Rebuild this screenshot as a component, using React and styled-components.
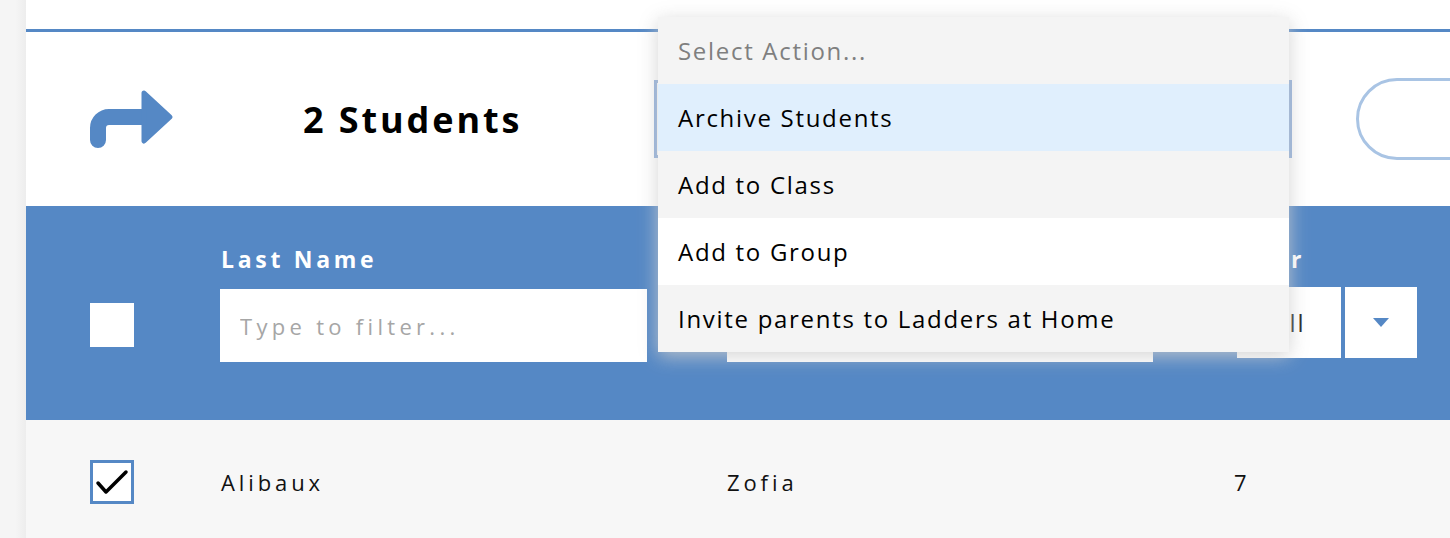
import styled, { createGlobalStyle } from 'styled-components';

const Global = createGlobalStyle`
    html, body {
        margin: 0;
        padding: 0;
        background: #f6f6f6;
        font-family: "Open Sans", "Noto Sans", sans-serif;
        overflow: hidden;
    }
`;

const Page = styled.div`
    display: flex;
    height: 538px;
    background: #f5f5f5;
`;

const Gutter = styled.div`
    width: 26px;
    flex-shrink: 0;
    background: linear-gradient(to right, #f5f5f5 60%, #ededed);
`;

const Panel = styled.main`
    flex: 1;
    display: flex;
    flex-direction: column;
    background: #fff;
    min-width: 0;
    overflow: hidden;
`;

const TopGap = styled.div`
    height: 29px;
    flex-shrink: 0;
    background: #fff;
`;

const Toolbar = styled.section`
    height: 174px;
    flex-shrink: 0;
    border-top: 3px solid #5588c5;
    display: flex;
    align-items: center;
    padding-left: 63px;
    background: #fff;
`;

const ShareIcon = styled.svg`
    width: 86px;
    height: 60px;
    flex-shrink: 0;
    margin-top: 2px;
`;

const Count = styled.h2`
    margin: 0 0 0 128px;
    width: 351px;
    flex-shrink: 0;
    font-size: 36px;
    font-weight: 700;
    letter-spacing: 2.9px;
    color: #000;
`;

const SelectWrap = styled.div`
    position: relative;
    flex-shrink: 0;
    width: 632px;
    height: 72px;
    border: 3px solid #8aabd9;
`;

const Menu = styled.ul`
    position: absolute;
    left: 1px;
    top: -66px;
    width: 631px;
    margin: 0;
    padding: 0;
    list-style: none;
    box-shadow: 0 4px 18px rgba(205, 205, 205, 0.85);
    z-index: 5;
`;

const Option = styled.li`
    height: 67px;
    display: flex;
    align-items: center;
    padding-left: 20px;
    font-size: 24px;
    letter-spacing: 1.7px;
    color: ${p => (p.$placeholder ? '#7f7f7f' : '#000')};
    background: ${p => (p.$active ? '#e0effd' : p.$white ? '#fff' : '#f4f4f4')};
`;

const PillButton = styled.button`
    margin-left: 64px;
    width: 200px;
    height: 82px;
    flex-shrink: 0;
    border: 3px solid #a9c4e4;
    border-radius: 42px;
    background: #fff;
`;

const TableHead = styled.div`
    display: grid;
    grid-template-columns: 130px 507px 510px 200px;
    align-items: start;
    padding: 38px 0 58px 64px;
    background: #5588c5;
    flex-shrink: 0;
`;

const Cell = styled.div`
    display: flex;
    flex-direction: column;
`;

const Label = styled.div`
    height: 30px;
    margin-bottom: 15px;
    margin-left: 1px;
    font-size: 23px;
    font-weight: 700;
    letter-spacing: 3.7px;
    line-height: 30px;
    color: #fff;
    white-space: nowrap;
`;

const FilterInput = styled.input`
    box-sizing: border-box;
    width: ${p => p.$w}px;
    height: 73px;
    border: none;
    outline: none;
    padding: 0 20px;
    font-family: inherit;
    font-size: 22px;
    letter-spacing: 4.3px;
    color: #333;
    &::placeholder {
        color: #a6a6a6;
    }
`;

const BlankBox = styled.div`
    width: 44px;
    height: 44px;
    margin-top: 59px;
    background: #fff;
`;

const SelectRow = styled.div`
    display: flex;
    gap: 4px;
    margin-top: -2px;
`;

const SelectBox = styled.div`
    width: 104px;
    height: 71px;
    display: flex;
    align-items: center;
    justify-content: center;
    background: #fff;
    font-size: 24px;
    letter-spacing: 2px;
    color: #222;
`;

const ToggleBox = styled.div`
    width: 72px;
    height: 71px;
    display: flex;
    align-items: center;
    justify-content: center;
    background: #fff;
`;

const Row = styled.div`
    display: grid;
    grid-template-columns: 130px 507px 510px 200px;
    align-items: center;
    height: 124px;
    flex-shrink: 0;
    padding-left: 64px;
    background: #f7f7f7;
`;

const CheckBox = styled.div`
    box-sizing: border-box;
    width: 44px;
    height: 44px;
    border: 3px solid #5588c5;
    background: #fff;
    display: flex;
    align-items: center;
    justify-content: center;
`;

const CellText = styled.div`
    font-size: 22px;
    letter-spacing: 3.9px;
    color: #111;
    margin-left: ${p => p.$shift || 0}px;
`;

export default function App() {
    return (
        <Page>
            <Global />
            <Gutter />
            <Panel>
                <TopGap />
                <Toolbar>
                    <ShareIcon viewBox="0 0 86 60">
                        <path d="M9 50 V38 A11 11 0 0 1 20 27 H58" fill="none" stroke="#5588c5" strokeWidth="16" strokeLinecap="round" strokeLinejoin="round" />
                        <polygon points="55,3 81,27 55,51" fill="#5588c5" stroke="#5588c5" strokeWidth="5" strokeLinejoin="round" />
                    </ShareIcon>
                    <Count>2 Students</Count>
                    <SelectWrap>
                        <Menu>
                            <Option $placeholder>Select Action...</Option>
                            <Option $active>Archive Students</Option>
                            <Option>Add to Class</Option>
                            <Option $white>Add to Group</Option>
                            <Option>Invite parents to Ladders at Home</Option>
                        </Menu>
                    </SelectWrap>
                    <PillButton />
                </Toolbar>
                <TableHead>
                    <Cell>
                        <BlankBox />
                    </Cell>
                    <Cell>
                        <Label>Last Name</Label>
                        <FilterInput $w={427} placeholder="Type to filter..." />
                    </Cell>
                    <Cell>
                        <Label>First Name</Label>
                        <FilterInput $w={426} placeholder="Type to filter..." />
                    </Cell>
                    <Cell>
                        <Label>Year</Label>
                        <SelectRow>
                            <SelectBox>All</SelectBox>
                            <ToggleBox>
                                <svg width="16" height="9" viewBox="0 0 16 9">
                                    <polygon points="0,0 16,0 8,9" fill="#5588c5" />
                                </svg>
                            </ToggleBox>
                        </SelectRow>
                    </Cell>
                </TableHead>
                <Row>
                    <CheckBox>
                        <svg width="36" height="32" viewBox="0 0 36 32">
                            <path d="M4 17 L12 26 L32 6" fill="none" stroke="#000" strokeWidth="3.5" strokeLinecap="round" strokeLinejoin="round" />
                        </svg>
                    </CheckBox>
                    <CellText $shift={1}>Alibaux</CellText>
                    <CellText>Zofia</CellText>
                    <CellText $shift={-3}>7</CellText>
                </Row>
            </Panel>
        </Page>
    );
}
